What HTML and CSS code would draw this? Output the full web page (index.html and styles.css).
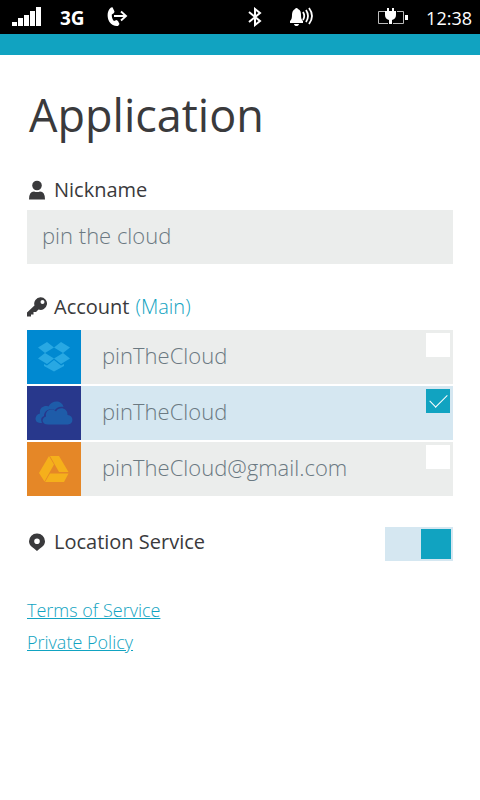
FILE: index.html
```html
<!DOCTYPE html>
<html lang="en">
<head>
<meta charset="utf-8">
<meta name="viewport" content="width=device-width, initial-scale=1">
<title>Application</title>
<link rel="stylesheet" href="styles.css">
</head>
<body>
<header class="status">
  <div class="status-group">
    <svg class="signal" width="30" height="20" viewBox="0 0 30 20" fill="#fff" aria-hidden="true">
      <path d="M0 15h5v4H0zM6 11h5v8H6zM12 8h5v11h-5zM18 4h5v15h-5zM24 0h5v19h-5z"/>
    </svg>
    <span class="network">3G</span>
    <svg class="call" width="22" height="20" viewBox="0 0 22 20" aria-hidden="true">
      <path d="M4 .5L5.500 .3L7.500 4.500L7 6L4.800 7.500C4.600 10 5.500 12.500 7 14L9.500 13L11 14L12.500 17L11 19C8 19.500 4.500 18 2.500 15C0 11-.5 4 4 .5z" fill="#fff"/>
      <path d="M7 9H19M14 4.500L19 9L14 13.500" fill="none" stroke="#fff" stroke-width="1.900"/>
    </svg>
  </div>
  <div class="status-group status-alerts">
    <svg class="bluetooth" width="14" height="20" viewBox="0 0 14 20" fill="none" stroke="#fff" stroke-width="2" aria-hidden="true">
      <path d="M1 5L12 14L7 18V2L12 6L1 15"/>
    </svg>
    <svg class="bell" width="24" height="20" viewBox="0 0 24 20" aria-hidden="true">
      <path d="M5 2C5.500 .8 7.500 .8 8 2C10.500 3 11 5 11 8C11 11 11.500 13 13 14V16H0V14C1.500 13 2 11 2 8C2 5 3 3 5 2zM4 17H9C8.500 19.800 4.500 19.800 4 17z" fill="#fff"/>
      <path d="M13 5Q15.500 9 13 13M16 3Q20 9 16 15M19 1Q25 9 19 17" fill="none" stroke="#fff" stroke-width="1.800"/>
    </svg>
  </div>
  <div class="status-group">
    <svg class="battery" width="31" height="18" viewBox="0 0 31 18" aria-hidden="true">
      <path d="M8 3.500H1.500V15.500H11M20 3.500H26.500V15.500H16" fill="none" stroke="#bbb" stroke-width="1"/>
      <path d="M28 7h3v5h-3zM10 0h2v3h3V0h2v3h2v4q0 4-4 5v4h-3v-4Q8 11 8 7V3h2z" fill="#fff"/>
    </svg>
    <time class="clock">12:38</time>
  </div>
</header>
<div class="band"></div>

<main class="page">
  <h1 class="title">Application</h1>

  <label class="heading" for="nickname">
    <svg class="heading-icon" width="20" height="20" viewBox="0 0 20 20" fill="#3a3a3c" aria-hidden="true">
      <circle cx="10" cy="5.500" r="4.800"/><path d="M2 19.500Q2 11.500 7 11.500Q10 12.500 13 11.500Q18 11.500 18 19.500z"/>
    </svg>
    Nickname
  </label>
  <input class="nickname" id="nickname" type="text" value="pin the cloud">

  <h2 class="heading">
    <svg class="heading-icon" width="20" height="20" viewBox="0 0 20 20" fill="#3a3a3c" aria-hidden="true">
      <path fill-rule="evenodd" d="M13.500 .3A6.300 6.300 0 0 0 7.500 8.500L0 15.500V19.500H4V17.500H6.500V15H9L11.500 12.500A6.300 6.300 0 1 0 13.500 .3zM15.500 3A2 2 0 1 1 15.500 7A2 2 0 0 1 15.500 3z"/>
    </svg>
    Account <span class="accent">(Main)</span>
  </h2>
  <div class="accounts">
    <label class="account">
      <span class="service dropbox">
        <svg width="34" height="30" viewBox="0 0 34 30" fill="#28a8e3" aria-hidden="true">
          <path d="M10 0L17 5.500L8 11L1 5.500zM24 0L33 5.500L26 11L17 5.500zM8 11L17 16.500L10 22L1 16.500zM26 11L33 16.500L24 22L17 16.500zM17 18L24 23.500L27 22V24L17 29.500L7 24V22L10 23.500z"/>
        </svg>
      </span>
      <span class="name">pinTheCloud</span>
      <input class="pick" type="checkbox">
    </label>
    <label class="account active">
      <span class="service onedrive">
        <svg width="40" height="24" viewBox="0 0 40 24" fill="#1e5ca9" aria-hidden="true">
          <path d="M8 22H6C0 22 0 14 6 12.500C5 7 10 4 14.500 5.500C18-1.500 28-1 29.500 6C25 5 22.500 7 21 9C15 7 10 10 10 15C7 16 6.500 19 8 22z"/>
          <path d="M14 23.500C7.500 23.500 7 17 12 15.500C11 9 18 6.500 22 10.500C25 5 34 7 33.500 14C40 14 40 23.500 34 23.500z"/>
        </svg>
      </span>
      <span class="name">pinTheCloud</span>
      <input class="pick" type="checkbox" checked>
    </label>
    <label class="account">
      <span class="service drive">
        <svg width="30" height="26" viewBox="0 0 30 26" fill="#f5b01b" aria-hidden="true">
          <path d="M10 0L15 8.500L5.500 25.500L0 17zM11 0H20L29.500 16H20zM11 17.500H29.500L25 26H6z"/>
        </svg>
      </span>
      <span class="name">pinTheCloud@gmail.com</span>
      <input class="pick" type="checkbox">
    </label>
  </div>

  <div class="location">
    <label class="heading" for="location">
      <svg class="heading-icon" width="20" height="20" viewBox="0 0 20 20" fill="#3a3a3c" aria-hidden="true">
        <path fill-rule="evenodd" d="M10 1.500A7.800 7.800 0 0 0 2 9.300C2 14 6 15.500 10 19C14 15.500 18 14 18 9.300A7.800 7.800 0 0 0 10 1.500zM10 6.500A2.800 2.800 0 1 1 10 12.100A2.800 2.800 0 0 1 10 6.500z"/>
      </svg>
      Location Service
    </label>
    <input class="switch" id="location" type="checkbox" role="switch" checked>
  </div>

  <nav class="links">
    <a href="#terms">Terms of Service</a>
    <a href="#privacy">Private Policy</a>
  </nav>
</main>
</body>
</html>
```
FILE: styles.css
```css
* {
  box-sizing: border-box;
}

body {
  margin: 0;
  background: #fff;
  color: #3a3a3c;
  font-family: "Open Sans", "Noto Sans", sans-serif;
}

.status {
  display: flex;
  justify-content: space-between;
  height: 34px;
  padding: 0 8px 0 12px;
  background: #000;
  color: #fff;
}

.status-group {
  display: flex;
  align-items: center;
}

.status-alerts {
  margin-left: 56px;
}

.network {
  margin: 2px 22px 0 18px;
  font-size: 19px;
  font-weight: 700;
  line-height: 24px;
}

.bell {
  margin-left: 28px;
}

.clock {
  margin: 2px 0 0 18px;
  font-size: 18px;
  font-weight: 500;
  line-height: 24px;
}

.band {
  height: 21px;
  background: #11a3c1;
}

.page {
  padding: 24px 27px;
}

.title {
  margin: 0 0 25px;
  padding-left: 2px;
  font-size: 45px;
  font-weight: 400;
  line-height: 72px;
}

.heading {
  display: flex;
  align-items: center;
  margin: 0;
  font-size: 20px;
  font-weight: 400;
  line-height: 28px;
}

.heading-icon {
  margin-right: 7px;
}

.nickname {
  display: block;
  width: 100%;
  height: 54px;
  margin: 6px 0 29px;
  padding: 0 15px 4px;
  border: 0;
  border-radius: 0;
  background: #ebedec;
  color: #6b7982;
  font: 300 22px "Open Sans", "Noto Sans", sans-serif;
}

.accent {
  margin-left: 6px;
  color: #11a3c1;
  font-weight: 300;
}

.accounts {
  display: grid;
  gap: 2px;
  margin-top: 9px;
}

.account {
  display: flex;
  height: 54px;
  background: #ebedec;
  color: #6b7982;
  font-size: 22px;
  font-weight: 300;
  line-height: 50px;
}

.account.active {
  background: #d5e7f1;
}

.service {
  display: flex;
  align-items: center;
  justify-content: center;
  width: 54px;
}

.dropbox {
  background: #0089d1;
}

.onedrive {
  background: #28388c;
}

.drive {
  background: #e58727;
}

.name {
  flex: 1;
  padding-left: 21px;
}

.pick {
  display: grid;
  place-items: center;
  appearance: none;
  width: 24px;
  height: 24px;
  margin: 3px 3px 0 0;
  background: #fff;
}

.pick:checked {
  background: #11a3c1;
}

.pick:checked::after {
  content: "";
  width: 8px;
  height: 16px;
  margin-bottom: 6px;
  border: solid #fff;
  border-width: 0 1px 1px 0;
  transform: rotate(45deg);
}

.location {
  display: flex;
  align-items: center;
  justify-content: space-between;
  margin-top: 31px;
}

.location .heading {
  padding-bottom: 4px;
}

.switch {
  display: flex;
  justify-content: flex-end;
  appearance: none;
  width: 68px;
  height: 34px;
  margin: 0;
  padding: 2px;
  background: #d5e7f1;
}

.switch::after {
  content: "";
  width: 30px;
  background: #11a3c1;
}

.switch:not(:checked) {
  justify-content: flex-start;
}

.links {
  display: flex;
  flex-direction: column;
  align-items: flex-start;
  margin-top: 33px;
  font-size: 18px;
  font-weight: 300;
  line-height: 32px;
}

.links a {
  color: #11a3c1;
}
```
